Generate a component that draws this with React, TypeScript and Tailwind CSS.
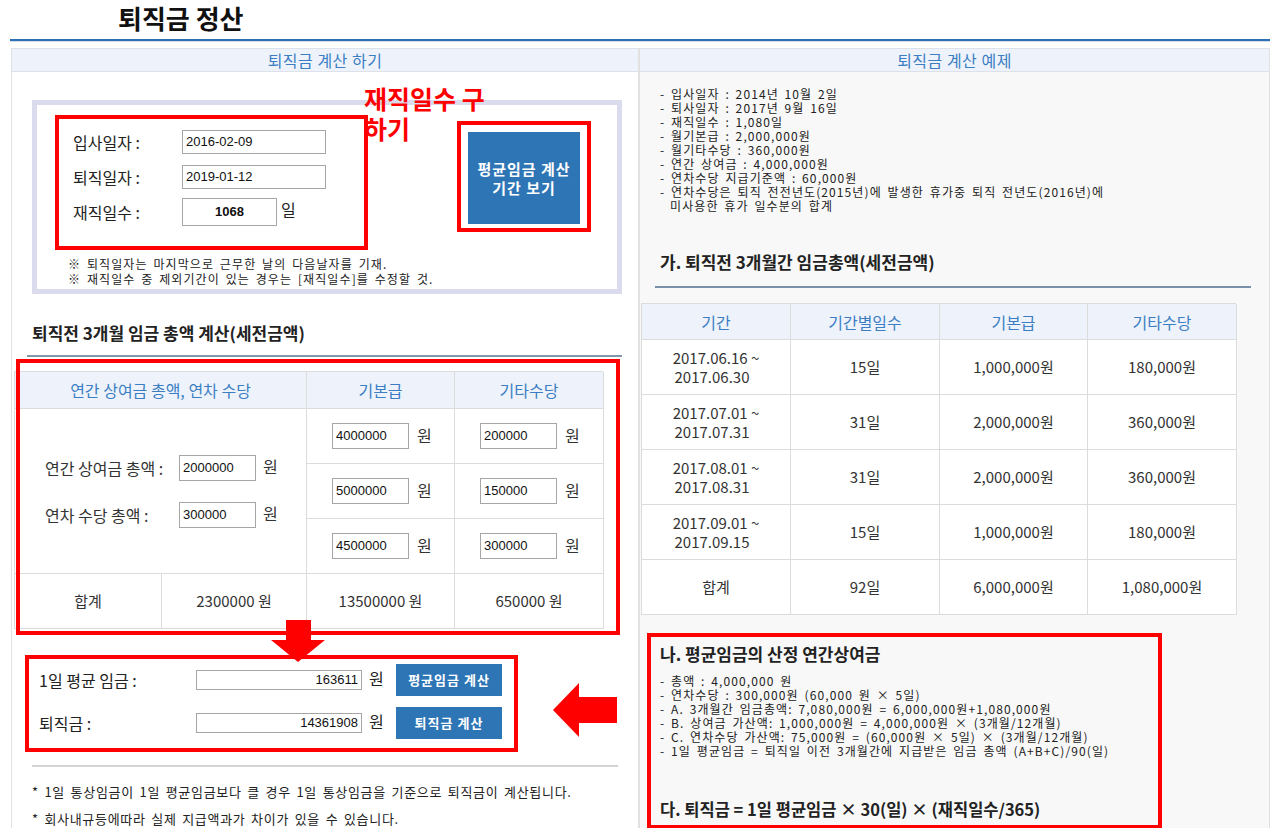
import React from 'react';

const cell = 'border-r border-b border-[#dcdcdc] flex items-center justify-center';
const head = `${cell} bg-[#eef3fb] text-[#3c7ec3] text-[16px]`;
const small = 'text-[12px] leading-[14px] tracking-[1.1px] [word-spacing:2px] text-[#222]';

function Box({ value, className }: { value: string; className: string }) {
  return (
    <div
      className={`bg-white border border-[#a6a6a6] flex items-center px-[3px] text-[13px] text-[#111] font-['Liberation_Sans','Noto_Sans_CJK_KR',sans-serif] ${className}`}
    >
      {value}
    </div>
  );
}

function AmountCell({ value }: { value: string }) {
  return (
    <div className={`${cell} justify-start pl-[25px]`}>
      <Box value={value} className="w-[77px] h-[26px]" />
      <span className="ml-[8px] text-[16px] -mt-[3px]">원</span>
    </div>
  );
}

function LeftPanel() {
  return (
    <div className="relative w-[628px] h-[780px] bg-white border-x border-[#e2e2e2]">
      <div className="h-[24px] bg-[#eef3fb] border-y border-[#dde2ea] flex items-center justify-center text-[16px] tracking-[0.5px] text-[#3c7ec3]">
        퇴직금 계산 하기
      </div>

      {/* 재직일수 */}
      <div className="ml-[20px] mt-[28px] w-[590px] h-[194px] border-[5px] border-[#dadbec]">
        <div className="flex items-start">
          <div className="ml-[18px] mt-[10px] w-[313px] h-[135px] border-4 border-[#ff0000] pt-[5px] pl-[14px] text-[16px] text-[#222]">
            <div className="h-[35px] flex items-center">
              <span className="w-[109px]">입사일자 :</span>
              <Box value="2016-02-09" className="w-[144px] h-[24px]" />
            </div>
            <div className="h-[35px] flex items-center">
              <span className="w-[109px]">퇴직일자 :</span>
              <Box value="2019-01-12" className="w-[144px] h-[24px]" />
            </div>
            <div className="h-[35px] flex items-center">
              <span className="w-[109px]">재직일수 :</span>
              <Box value="1068" className="w-[95px] h-[28px] justify-center font-bold" />
              <span className="ml-[4px] -mt-[6px]">일</span>
            </div>
          </div>
          <div className="ml-[89px] mt-[16px] border-4 border-[#ff0000] pt-[7px] px-[7px] pb-[4px]">
            <div className="w-[112px] h-[92px] bg-[#2e75b6] flex flex-col items-center justify-center text-white font-bold text-[15px] leading-[19px] tracking-[1px]">
              <span>평균임금 계산</span>
              <span>기간 보기</span>
            </div>
          </div>
        </div>
        <div className={`mt-[6px] pl-[31px] ${small} leading-[15px]`}>
          <p>※ 퇴직일자는 마지막으로 근무한 날의 다음날자를 기재.</p>
          <p>※ 재직일수 중 제외기간이 있는 경우는 [재직일수]를 수정할 것.</p>
        </div>
      </div>

      <h2 className="mt-[29px] pl-[20px] text-[17px] leading-[20px] font-bold text-[#222]">
        퇴직전 3개월 임금 총액 계산(세전금액)
      </h2>
      <div className="ml-[15px] mt-[12px] w-[595px] h-[2px] bg-[#8497a8]" />

      {/* 임금 총액 표 */}
      <div className="ml-[2px] mt-[14px] w-[589px] grid grid-cols-[147px_145px_148px_149px] grid-rows-[37px_55px_55px_55px_55px] border-t border-l border-[#dcdcdc] text-[#333]">
        <div className={`${head} col-span-2`}>연간 상여금 총액, 연차 수당</div>
        <div className={head}>기본급</div>
        <div className={head}>기타수당</div>
        <div className="col-span-2 row-span-3 border-r border-b border-[#dcdcdc] flex flex-col justify-center gap-[21px] pl-[30px] text-[16px]">
          <div className="flex items-center h-[26px]">
            <span className="w-[134px]">연간 상여금 총액 :</span>
            <Box value="2000000" className="w-[77px] h-[26px]" />
            <span className="ml-[7px] -mt-[3px]">원</span>
          </div>
          <div className="flex items-center h-[26px]">
            <span className="w-[134px]">연차 수당 총액 :</span>
            <Box value="300000" className="w-[77px] h-[26px]" />
            <span className="ml-[7px] -mt-[3px]">원</span>
          </div>
        </div>
        <AmountCell value="4000000" />
        <AmountCell value="200000" />
        <AmountCell value="5000000" />
        <AmountCell value="150000" />
        <AmountCell value="4500000" />
        <AmountCell value="300000" />
        <div className={`${cell} text-[15px]`}>합계</div>
        <div className={`${cell} text-[15px]`}>2300000 원</div>
        <div className={`${cell} text-[15px]`}>13500000 원</div>
        <div className={`${cell} text-[15px]`}>650000 원</div>
      </div>

      {/* 평균임금 / 퇴직금 */}
      <div className="ml-[13px] mt-[26px] w-[493px] h-[97px] border-4 border-[#ff0000] pt-[5px] pl-[10px] text-[16px] text-[#222]">
        <div className="h-[32px] flex items-center">
          <span className="w-[157px]">1일 평균 임금 :</span>
          <Box value="163611" className="w-[166px] h-[20px] justify-end" />
          <span className="w-[34px] pl-[7px] -mt-[4px]">원</span>
          <div className="w-[106px] h-[32px] bg-[#2e75b6] flex items-center justify-center text-white font-bold text-[13px] tracking-[1px]">
            평균임금 계산
          </div>
        </div>
        <div className="mt-[11px] h-[32px] flex items-center">
          <span className="w-[157px]">퇴직금 :</span>
          <Box value="14361908" className="w-[166px] h-[20px] justify-end" />
          <span className="w-[34px] pl-[7px] -mt-[4px]">원</span>
          <div className="w-[106px] h-[32px] bg-[#2e75b6] flex items-center justify-center text-white font-bold text-[13px] tracking-[1px]">
            퇴직금 계산
          </div>
        </div>
      </div>

      <div className="ml-[20px] mt-[13px] w-[586px] h-[2px] bg-[#d4d4d4]" />
      <div className="pl-[20px] text-[13px] leading-[20px] tracking-[0.7px] [word-spacing:2px] text-[#222]">
        <p className="mt-[15px]">* 1일 통상임금이 1일 평균임금보다 클 경우 1일 통상임금을 기준으로 퇴직금이 계산됩니다.</p>
        <p className="mt-[7px]">* 회사내규등에따라 실제 지급액과가 차이가 있을 수 있습니다.</p>
      </div>

      {/* annotations */}
      <div className="absolute left-[352px] top-[35px] w-[145px] break-keep text-[25px] leading-[30px] font-bold text-[#ff0000]">
        재직일수 구 하기
      </div>
      <div className="absolute left-[4px] top-[311px] w-[604px] h-[276px] border-4 border-[#ff0000]" />
      <svg className="absolute left-[259px] top-[572px]" width="54" height="42" viewBox="0 0 54 42">
        <polygon points="15,0 40,0 40,20 54,20 27,42 0,20 15,20" fill="#ff0000" />
      </svg>
      <svg className="absolute left-[541px] top-[635px]" width="64" height="54" viewBox="0 0 64 54">
        <polygon points="0,27 26,0 26,14 64,14 64,40 26,40 26,54" fill="#ff0000" />
      </svg>
    </div>
  );
}

const periods = [
  ['2017.06.16 ~', '2017.06.30', '15일', '1,000,000원', '180,000원'],
  ['2017.07.01 ~', '2017.07.31', '31일', '2,000,000원', '360,000원'],
  ['2017.08.01 ~', '2017.08.31', '31일', '2,000,000원', '360,000원'],
  ['2017.09.01 ~', '2017.09.15', '15일', '1,000,000원', '180,000원'],
];

function RightPanel() {
  return (
    <div className="w-[631px] h-[780px] bg-[#f8f8f8] border-x border-[#e0e0e0]">
      <div className="h-[24px] bg-[#eef3fb] border-y border-[#dde2ea] flex items-center justify-center text-[16px] tracking-[0.5px] text-[#3c7ec3]">
        퇴직금 계산 예제
      </div>
      <div className={`pt-[15px] pl-[20px] ${small}`}>
        <p>- 입사일자 : 2014년 10월 2일</p>
        <p>- 퇴사일자 : 2017년 9월 16일</p>
        <p>- 재직일수 : 1,080일</p>
        <p>- 월기본급 : 2,000,000원</p>
        <p>- 월기타수당 : 360,000원</p>
        <p>- 연간 상여금 : 4,000,000원</p>
        <p>- 연차수당 지급기준액 : 60,000원</p>
        <p>- 연차수당은 퇴직 전전년도(2015년)에 발생한 휴가중 퇴직 전년도(2016년)에</p>
        <p className="pl-[10px]">미사용한 휴가 일수분의 합계</p>
      </div>
      <h2 className="mt-[39px] pl-[20px] text-[17px] leading-[20px] font-bold text-[#222]">
        가. 퇴직전 3개월간 임금총액(세전금액)
      </h2>
      <div className="ml-[15px] mt-[14px] w-[596px] h-[2px] bg-[#7890a8]" />

      <div className="ml-[1px] mt-[15px] w-[595px] grid grid-cols-[149px_149px_148px_149px] grid-rows-[36px_55px_55px_55px_55px_55px] border-t border-l border-[#dcdcdc] bg-white text-[15px] text-[#333]">
        <div className={head}>기간</div>
        <div className={head}>기간별일수</div>
        <div className={head}>기본급</div>
        <div className={head}>기타수당</div>
        {periods.map((r) => (
          <React.Fragment key={r[0]}>
            <div className={`${cell} flex-col leading-[19px]`}>
              <span>{r[0]}</span>
              <span className="-ml-[8px]">{r[1]}</span>
            </div>
            <div className={cell}>{r[2]}</div>
            <div className={cell}>{r[3]}</div>
            <div className={cell}>{r[4]}</div>
          </React.Fragment>
        ))}
        <div className={cell}>합계</div>
        <div className={cell}>92일</div>
        <div className={cell}>6,000,000원</div>
        <div className={cell}>1,080,000원</div>
      </div>

      <div className="ml-[7px] mt-[18px] w-[515px] h-[196px] border-4 border-[#ff0000] pt-[7px] pl-[9px] text-[#222]">
        <h3 className="text-[17px] leading-[20px] font-bold">나. 평균임금의 산정 연간상여금</h3>
        <div className={`mt-[10px] ${small}`}>
          <p>- 총액 : 4,000,000 원</p>
          <p>- 연차수당 : 300,000원 (60,000 원 × 5일)</p>
          <p>- A. 3개월간 임금총액: 7,080,000원 = 6,000,000원+1,080,000원</p>
          <p>- B. 상여금 가산액: 1,000,000원 = 4,000,000원 × (3개월/12개월)</p>
          <p>- C. 연차수당 가산액: 75,000원 = (60,000원 × 5일) × (3개월/12개월)</p>
          <p>- 1일 평균임금 = 퇴직일 이전 3개월간에 지급받은 임금 총액 (A+B+C)/90(일)</p>
        </div>
        <h3 className="mt-[41px] text-[16.5px] leading-[20px] font-bold">
          다. 퇴직금 = 1일 평균임금 × 30(일) × (재직일수/365)
        </h3>
      </div>
    </div>
  );
}

export default function App() {
  return (
    <div className="w-[1280px] h-[828px] overflow-hidden bg-white text-[#222] font-['Noto_Sans_CJK_KR','Noto_Sans',sans-serif]">
      <div className="h-[39px] pl-[118px] text-[26px] leading-[36px] font-bold text-[#111]">퇴직금 정산</div>
      <div className="mx-[10px] h-[2px] bg-[#2c6fb5]" />
      <div className="mx-[10px] h-[1px] bg-[#d5dce4]" />
      <div className="flex pl-[11px] pt-[6px]">
        <LeftPanel />
        <RightPanel />
      </div>
    </div>
  );
}
